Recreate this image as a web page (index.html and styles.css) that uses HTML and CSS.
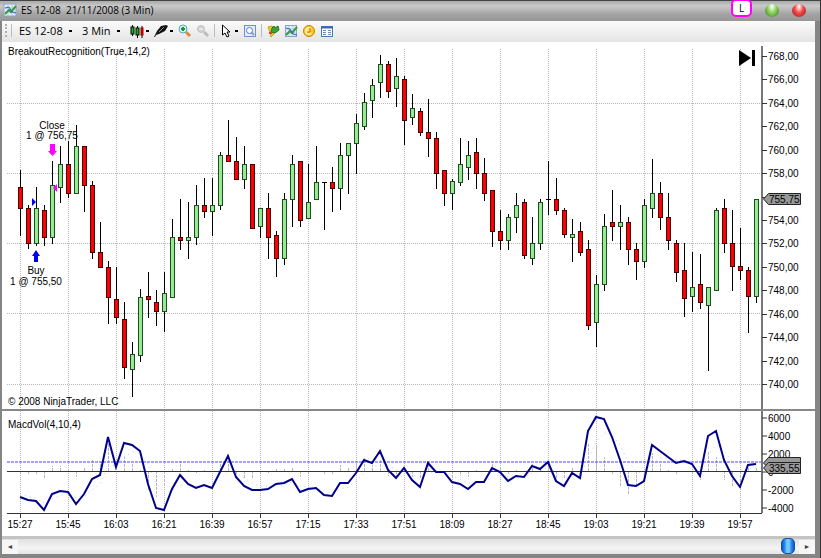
FILE: index.html
```html
<!DOCTYPE html>
<html lang="en">
<head>
  <meta charset="UTF-8">
  <meta name="viewport" content="width=device-width, initial-scale=1.0">
  <link rel="stylesheet" href="styles.css">
  <title>ES 12-08 21/11/2008 (3 Min)</title>
</head>
<body>

  <div class="window">
    <header class="titlebar">
      <svg class="icon" viewBox="0 0 14 14"><rect x="1" y="1" width="12" height="12" fill="#e4eefa" stroke="#8aa4c8"/><path d="M1 5h12M1 9h12M5 1v12M9 1v12" stroke="#b4cbe6"/><path d="M2 11l4-4 2 2 5-6" fill="none" stroke="#3a9a3a" stroke-width="2"/><path d="M2 5l4-1 3 5 4 1" fill="none" stroke="#2d65c0"/></svg>
      <h1>ES 12-08&nbsp; 21/11/2008 (3 Min)</h1>
      <button class="link-button">L</button>
      <button class="orb green" aria-label="Minimize"></button>
      <button class="orb red" aria-label="Close"></button>
    </header>

    <nav class="toolbar">
      <span class="grip"></span>
      <span class="separator"></span>
      <select class="instrument" aria-label="Instrument"><option>ES 12-08</option></select>
      <select class="interval" aria-label="Interval"><option>3 Min</option></select>
      <button class="tool menu" aria-label="Chart style">
        <svg class="icon" viewBox="0 0 14 14"><path d="M2.500 1v11M7.500 2v12M12 2v12" stroke="#000"/><rect x="1" y="3" width="3" height="7" fill="#19b219" stroke="#000"/><rect x="6" y="4" width="3" height="7" fill="#19b219" stroke="#000"/><rect x="11" y="4" width="2" height="7" fill="#e00000" stroke="#900"/></svg>
      </button>
      <button class="tool menu" aria-label="Drawing tools">
        <svg class="icon" viewBox="0 0 14 14"><path d="M0 13l3-6 4-5 5-1 2 1-3 5-6 3-3 1-1 2z" fill="#111"/><path d="M5 8l5-5" stroke="#888"/></svg>
      </button>
      <button class="tool" aria-label="Zoom in">
        <svg class="icon" viewBox="0 0 14 14"><path d="M8 8l4 4" stroke="#e08a38" stroke-width="3"/><circle cx="5" cy="5" r="4" fill="#d2f2ec" stroke="#5aa8c8"/><path d="M5 3v4M3 5h4" stroke="#18903c" stroke-width="2"/></svg>
      </button>
      <button class="tool" aria-label="Zoom out" disabled>
        <svg class="icon" viewBox="0 0 14 14"><path d="M8 8l4 4" stroke="#bbb" stroke-width="3"/><circle cx="5" cy="5" r="3.500" fill="#d0d0d0" stroke="#c4c4c4"/><path d="M3 5h4" stroke="#fff"/></svg>
      </button>
      <span class="separator"></span>
      <button class="tool menu" aria-label="Cursor">
        <svg class="icon" viewBox="0 0 14 14"><path d="M3.500 1v10l2.500-2 2 4 2-1-2-4h3z" fill="#fff" stroke="#000"/></svg>
      </button>
      <button class="tool" aria-label="Zoom frame">
        <svg class="icon" viewBox="0 0 14 14"><rect x="1.500" y="1.500" width="11" height="11" fill="#e3edf8" stroke="#6f93c6"/><path d="M8 8l3 3" stroke="#999" stroke-width="2"/><circle cx="6.500" cy="6.500" r="3" fill="#fff" stroke="#4f83c0"/></svg>
      </button>
      <span class="separator"></span>
      <button class="tool" aria-label="Data series">
        <svg class="icon" viewBox="0 0 14 14"><path d="M2 3l4-1 2 3v5l-3 3-1-5z" fill="#f0cc28" stroke="#c8a01a"/><path d="M6 4l2-2 1 2 3-2 1 4-4 3-4-1z" fill="#35a835" stroke="#1d7828"/><path d="M3 8h3v2H3z" fill="#d44b22"/></svg>
      </button>
      <button class="tool" aria-label="Indicators">
        <svg class="icon" viewBox="0 0 14 14"><rect x="1.500" y="1.500" width="11" height="11" fill="#e4eefa" stroke="#8aa4c8"/><path d="M2 5h10M2 9h10M5 2v10M9 2v10" stroke="#b4cbe6"/><path d="M2 11l4-4 2 2 5-6" fill="none" stroke="#3a9a3a" stroke-width="2"/><path d="M2 4l4 1 3 5 4 1" fill="none" stroke="#2d65c0"/></svg>
      </button>
      <button class="tool" aria-label="Strategies">
        <svg class="icon" viewBox="0 0 14 14"><circle cx="7" cy="7" r="5.500" fill="#ffc629" stroke="#c98200"/><path d="M9 5a3 3 0 1 0 0 4M4 7h4" fill="none" stroke="#fff0a0" stroke-width="2"/><path d="M8 4v4H5" fill="none" stroke="#ad6c00"/></svg>
      </button>
      <button class="tool" aria-label="Properties">
        <svg class="icon" viewBox="0 0 14 14"><rect x="1.500" y="2.500" width="11" height="10" fill="#fff" stroke="#4d78b8"/><path d="M1 3.500h12" stroke="#3569b8" stroke-width="2"/><path d="M3 6.500h3M8 6.500h3M3 8.500h3M8 8.500h3M3 10.500h3M8 10.500h3" stroke="#6f8aae"/></svg>
      </button>
    </nav>

    <main>
      <svg class="panel" id="price" viewBox="2 42 813 367" role="img" aria-label="Price chart"></svg>
      <svg class="panel" id="macd" viewBox="2 411 813 125" role="img" aria-label="MacdVol chart"></svg>
    </main>

    <footer class="scrollbar">
      <button aria-label="Scroll left">&#9668;</button>
      <input type="range" min="0" max="100" value="100" aria-label="Time">
      <button aria-label="Scroll right">&#9658;</button>
    </footer>
  </div>

  <script src="chart.js"></script>
</body>
</html>
```
FILE: styles.css
```css
* {
  box-sizing: border-box;
}

body {
  margin: 0;
  font-family: "Open Sans", "Noto Sans", sans-serif;
  color: #000;
  background: #333;
}

button, select, input {
  margin: 0;
  padding: 0;
  border: none;
  font: inherit;
  color: inherit;
  background: none;
}

.window {
  display: flex;
  flex-direction: column;
  min-height: 100vh;
  margin-right: 1px;
  border: solid #858585;
  border-width: 0 5px 4px 2px;
  background: #fff;
}

.icon {
  display: block;
  width: 14px;
  height: 14px;
}

/* title bar */
.titlebar {
  display: flex;
  align-items: center;
  height: 21px;
  margin-left: -2px;
  margin-right: -5px;
  padding: 0 14px 2px 3px;
  border-top: 1px solid #444;
  background: linear-gradient(#aaa, #c9c9c9 25%, #a4a4a4 65%, #969696);
}

.titlebar h1 {
  flex: 1;
  margin: 0 0 0 4px;
  font-size: 10px;
  font-weight: normal;
  line-height: 18px;
}

.link-button {
  width: 21px;
  height: 18px;
  margin: -4px 13px 0 0;
  border: 2px solid #f0f;
  border-radius: 5px;
  background: #fff;
  font-size: 10px;
  line-height: 14px;
}

.orb {
  width: 14px;
  height: 13px;
  border-radius: 50%;
}

.orb.green {
  margin-right: 13px;
  background: radial-gradient(ellipse at 50% 20%, #fff, #8bd05a 45%, #2c701b);
}

.orb.red {
  background: radial-gradient(ellipse at 50% 20%, #fff, #f04848 45%, #9d1010);
}

/* toolbar */
.toolbar {
  display: flex;
  align-items: center;
  gap: 4px;
  height: 21px;
  padding: 0 0 2px 3px;
  background: linear-gradient(#fbfbfb, #e4e4e4);
}

.grip {
  width: 2px;
  height: 13px;
  border-left: 2px dotted #b0b0b0;
}

.separator {
  width: 1px;
  height: 13px;
  background: #bbb;
}

.toolbar select {
  height: 18px;
  padding-left: 3px;
  appearance: none;
  font-size: 11px;
  background: linear-gradient(#000, #000) right 6px center / 3px 2px no-repeat;
}

.toolbar .instrument {
  width: 62px;
}

.interval {
  width: 47px;
  margin-left: -3px;
}

.tool {
  display: flex;
  align-items: center;
}

.tool.menu::after {
  content: "";
  width: 3px;
  height: 2px;
  margin: 0 1px 0 2px;
  background: #000;
}

/* chart panels */
main {
  flex: 1;
}

.panel {
  display: block;
  width: 100%;
  font-family: "Liberation Sans", Arial, sans-serif;
  font-size: 10px;
}

#macd {
  border-top: 2px solid #888;
  box-sizing: content-box;
}

.grid {
  stroke: #b8b8b8;
  stroke-dasharray: 1 1;
}

.axis {
  stroke: #333;
}

.price-axis {
  stroke: #777;
  stroke-width: 2;
}

.wick {
  stroke: #000;
}

.candle.up {
  fill: #90ee90;
  stroke: #244a24;
}

.candle.down {
  fill: #f00;
  stroke: #400;
}

.middle {
  text-anchor: middle;
}

.marker {
  fill: #999;
  stroke: #222;
}

.histogram {
  stroke: #b8b8b8;
  stroke-dasharray: 3 1;
}

.signal {
  fill: none;
  stroke: #c8c8ff;
  stroke-dasharray: 1 4;
}

.level {
  stroke: #4444ff;
  stroke-dasharray: 3 1;
}

.macd-line {
  fill: none;
  stroke: #00008b;
  stroke-width: 2;
}

.buy {
  fill: #00f;
}

.sell {
  fill: #f0f;
}

/* scroll bar */
.scrollbar {
  display: flex;
  align-items: center;
  height: 18px;
  border-top: 3px solid #c4c4c4;
  background: linear-gradient(#e0e0e0, #f4f4f4 60%, #e4e4e4);
}

.scrollbar button {
  width: 16px;
  height: 14px;
  font-size: 7px;
  line-height: 14px;
  color: #444;
  background: #f6f6f6;
}

.scrollbar input {
  flex: 1;
  min-width: 0;
  height: 16px;
  margin: -2px 4px 0 0;
  appearance: none;
}

.scrollbar input::-webkit-slider-thumb {
  appearance: none;
  width: 14px;
  height: 16px;
  border: 1px solid #1450a0;
  border-radius: 5px;
  background: linear-gradient(90deg, #0c58c8, #2f90f4 25%, #8cdcff 45%, #1668d0 50%, #8cdcff 55%, #2f90f4 75%, #0c58c8);
}
```
FILE: chart.js
```javascript
const STEP = 8;
const FIRST_X = 20;
const AXIS_X = 762;

// high, body top, body bottom, low, direction
const candles = [
  [170, 187, 208, 235, 'd'], [205, 208, 243, 248, 'd'], [187, 208, 243, 245, 'u'], [205, 210, 237, 245, 'd'],
  [161, 185, 237, 243, 'u'], [146, 164, 187, 202, 'u'], [141, 164, 193, 197, 'd'], [125, 146, 193, 193, 'u'],
  [146, 146, 185, 211, 'd'], [181, 185, 252, 258, 'd'], [222, 252, 267, 267, 'd'], [261, 267, 297, 323, 'd'],
  [267, 299, 317, 323, 'd'], [302, 319, 367, 378, 'd'], [342, 354, 369, 396, 'u'], [289, 297, 355, 361, 'u'],
  [272, 296, 299, 317, 'd'], [290, 302, 311, 325, 'd'], [272, 293, 311, 331, 'u'], [219, 237, 297, 297, 'u'],
  [199, 237, 240, 249, 'd'], [202, 237, 240, 258, 'u'], [185, 205, 237, 244, 'u'], [178, 205, 211, 217, 'd'],
  [178, 205, 211, 235, 'u'], [152, 155, 205, 209, 'u'], [120, 155, 161, 161, 'd'], [137, 161, 179, 179, 'd'],
  [146, 164, 179, 188, 'u'], [164, 164, 228, 228, 'd'], [208, 208, 226, 237, 'u'], [193, 208, 237, 258, 'd'],
  [231, 235, 258, 276, 'd'], [193, 199, 258, 264, 'u'], [155, 164, 199, 226, 'u'], [161, 161, 220, 226, 'd'],
  [164, 202, 218, 218, 'u'], [146, 182, 199, 199, 'u'], [182, 182, 182, 229, 'u'], [167, 182, 188, 211, 'd'],
  [143, 155, 188, 209, 'u'], [143, 143, 155, 193, 'u'], [114, 123, 143, 173, 'u'], [93, 102, 126, 129, 'u'],
  [79, 85, 100, 117, 'u'], [55, 64, 82, 97, 'u'], [61, 64, 91, 97, 'd'], [58, 76, 88, 106, 'u'],
  [76, 79, 120, 144, 'd'], [94, 108, 117, 124, 'u'], [108, 111, 132, 135, 'd'], [99, 132, 138, 156, 'd'],
  [132, 138, 173, 188, 'd'], [170, 170, 193, 205, 'd'], [179, 181, 193, 209, 'u'], [138, 164, 182, 185, 'u'],
  [141, 155, 167, 179, 'u'], [138, 152, 173, 188, 'd'], [158, 173, 193, 200, 'd'], [190, 190, 231, 246, 'd'],
  [210, 231, 240, 249, 'd'], [214, 217, 240, 249, 'u'], [193, 205, 217, 232, 'u'], [199, 202, 255, 258, 'd'],
  [217, 243, 258, 264, 'u'], [199, 202, 243, 249, 'u'], [161, 199, 199, 214, 'u'], [178, 199, 210, 214, 'd'],
  [208, 210, 234, 237, 'd'], [219, 234, 237, 261, 'u'], [222, 231, 252, 255, 'd'], [240, 249, 325, 329, 'd'],
  [275, 284, 322, 346, 'u'], [214, 226, 284, 290, 'u'], [190, 222, 226, 240, 'd'], [205, 222, 226, 249, 'u'],
  [217, 222, 249, 264, 'd'], [243, 249, 261, 279, 'd'], [199, 205, 261, 267, 'u'], [159, 193, 208, 217, 'u'],
  [182, 193, 217, 229, 'd'], [193, 217, 240, 249, 'd'], [240, 243, 272, 281, 'd'], [243, 270, 298, 316, 'd'],
  [252, 287, 296, 311, 'u'], [254, 284, 302, 308, 'd'], [287, 287, 305, 370, 'u'], [208, 210, 290, 290, 'u'],
  [199, 208, 243, 252, 'd'], [210, 243, 266, 290, 'd'], [228, 266, 270, 279, 'd'], [267, 270, 296, 332, 'd'],
  [199, 199, 296, 302, 'u']
];

const macd = [
  497, 500, 501, 510, 494, 491, 492, 504, 494, 479, 475, 437, 467, 443, 445, 451, 484, 508, 510, 489,
  475, 484, 488, 485, 488, 472, 456, 477, 486, 490, 490, 489, 484, 483, 479, 492, 489, 488, 495, 496,
  483, 483, 473, 460, 463, 451, 470, 478, 468, 480, 487, 463, 472, 472, 482, 484, 489, 482, 482, 468,
  472, 481, 476, 477, 466, 469, 462, 481, 486, 473, 478, 431, 417, 419, 437, 460, 485, 486, 481, 445,
  451, 457, 463, 461, 464, 476, 436, 431, 460, 476, 487, 465, 464
];

const times = ['15:27', '15:45', '16:03', '16:21', '16:39', '16:57', '17:15', '17:33',
  '17:51', '18:09', '18:27', '18:45', '19:03', '19:21', '19:39', '19:57'];

const price = document.getElementById('price');
const lower = document.getElementById('macd');

function add(parent, name, attrs, text) {
  const el = document.createElementNS('http://www.w3.org/2000/svg', name);
  Object.keys(attrs).forEach(key => el.setAttribute(key, attrs[key]));
  if (text) el.textContent = text;
  parent.appendChild(el);
}

function line(parent, x1, y1, x2, y2, cls) {
  add(parent, 'path', { d: `M${x1} ${y1}L${x2} ${y2}`, class: cls });
}

function label(parent, x, y, text, cls) {
  add(parent, 'text', { x: x, y: y, class: cls || 'label' }, text);
}

function marker(parent, y, text) {
  add(parent, 'path', { d: `M763.5 ${y}l5 -5.5h32v11h-32z`, class: 'marker' });
  if (text) label(parent, 769, y + 4, text);
}

function drawPrice() {
  // grid
  [103, 173, 243, 313, 384].forEach(y => line(price, 7, y + 0.5, AXIS_X, y + 0.5, 'grid'));
  times.forEach((t, i) => line(price, FIRST_X + 48 * i + 0.5, 49, FIRST_X + 48 * i + 0.5, 409, 'grid'));

  candles.forEach(([high, top, bottom, low, dir], i) => {
    const x = FIRST_X + i * STEP;
    line(price, x + 0.5, high, x + 0.5, low + 1, 'wick');
    add(price, 'rect', {
      x: x - 1.5, y: top + 0.5, width: 4, height: bottom - top,
      class: 'candle ' + (dir === 'u' ? 'up' : 'down')
    });
    // open equals close
    if (top === bottom) line(price, x - 2, top + 0.5, x + 3, top + 0.5, 'wick');
  });

  // price axis
  line(price, AXIS_X, 46, AXIS_X, 409, 'price-axis');
  for (let i = 0; i < 15; i++) {
    const y = Math.round(56 + i * 23.43);
    line(price, AXIS_X, y + 0.5, 767, y + 0.5, 'axis');
    if (i !== 6) label(price, 768, y + 4, `${768 - i * 2},00`);
  }
  marker(price, 199, '755,75');

  label(price, 8, 55, 'BreakoutRecognition(True,14,2)');
  label(price, 8, 405, '© 2008 NinjaTrader, LLC');

  // executions
  label(price, 52, 129, 'Close', 'middle');
  label(price, 52, 139, '1 @ 756,75', 'middle');
  add(price, 'path', { d: 'M50 144h5v7h2l-4.500 5-4.500-5h2z', class: 'sell' });
  add(price, 'path', { d: 'M57 184v8l-4-4z', class: 'sell' });
  add(price, 'path', { d: 'M32 198v8l4-4z', class: 'buy' });
  add(price, 'path', { d: 'M34 262h4v-6h2l-4-6-4 6h2z', class: 'buy' });
  label(price, 36, 274, 'Buy', 'middle');
  label(price, 36, 285, '1 @ 755,50', 'middle');

  // jump to last bar
  add(price, 'path', { d: 'M739 50v16l12-8zM752 50h3v16h-3z' });
}

function drawMacd() {
  times.forEach((t, i) => {
    const x = FIRST_X + 48 * i;
    line(lower, x + 0.5, 411, x + 0.5, 513, 'grid');
    line(lower, x + 0.5, 513, x + 0.5, 518, 'axis');
    label(lower, x, 528, t, 'middle');
  });

  // signal is an exponential average, the bars are the difference
  const zero = 471;
  let average = macd[0] - 5;
  const signal = [];
  macd.forEach((value, i) => {
    const x = FIRST_X + i * STEP;
    average += (value - average) * 0.4;
    signal.push(`${x},${Math.round(average)}`);
    line(lower, x + 0.5, zero, x + 0.5, zero + Math.round(value - average), 'histogram');
  });
  add(lower, 'polyline', { points: signal.join(' '), class: 'signal' });

  line(lower, 7, zero + 0.5, AXIS_X, zero + 0.5, 'axis');
  line(lower, 7, 462, AXIS_X, 462, 'level');
  add(lower, 'polyline', {
    points: macd.map((y, i) => `${FIRST_X + i * STEP},${y}`).join(' '),
    class: 'macd-line'
  });

  line(lower, 7, 513.5, AXIS_X, 513.5, 'axis');
  line(lower, AXIS_X, 411, AXIS_X, 513, 'price-axis');
  ['6000', '4000', '2000', '0', '-2000', '-4000'].forEach((text, i) => {
    const y = 418 + i * 18;
    line(lower, AXIS_X, y, 767, y, 'axis');
    label(lower, 768, y + 4, text);
  });
  // threshold marker sits behind the current value
  marker(lower, 463);
  marker(lower, 468, '335,55');

  label(lower, 8, 428, 'MacdVol(4,10,4)');
}

drawPrice();
drawMacd();
```
